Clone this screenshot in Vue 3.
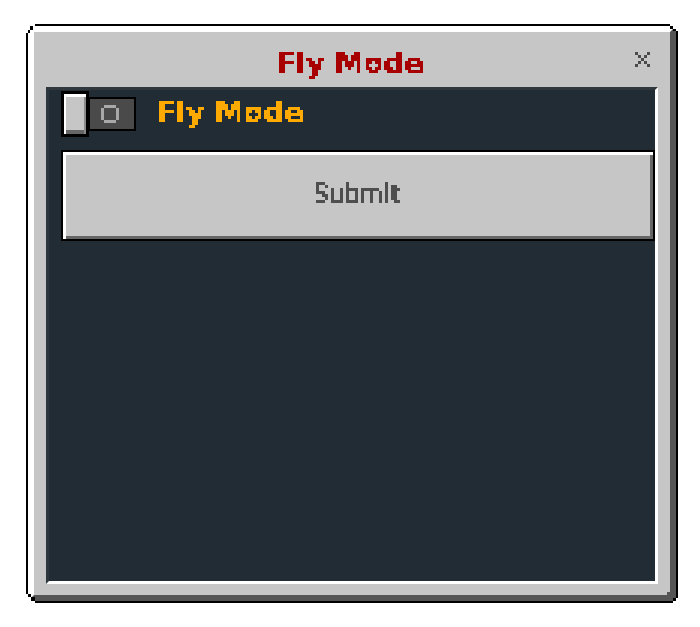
<template>
  <div class="page">
    <svg class="defs" width="0" height="0" aria-hidden="true">
      <filter id="pixel" x="0" y="0" width="100%" height="100%" primitiveUnits="userSpaceOnUse" color-interpolation-filters="sRGB">
        <feFlood x="1" y="1" width="1" height="1" />
        <feComposite width="3" height="3" />
        <feTile result="grid" />
        <feComposite in="SourceGraphic" in2="grid" operator="in" />
        <feComponentTransfer>
          <feFuncA type="discrete" tableValues="0 1 1 1" />
        </feComponentTransfer>
        <feMorphology operator="dilate" radius="1" />
        <feGaussianBlur stdDeviation="0.4" />
      </filter>
    </svg>

    <div class="window">
      <div class="bevel">
        <header class="title-bar">
          <h1 class="title">{{ title }}</h1>
          <svg class="close" viewBox="0 0 15 15" width="15" height="15">
            <path d="M0 0h3v3H0zM3 3h3v3H3zM6 6h3v3H6zM9 3h3v3H9zM12 0h3v3h-3zM3 9h3v3H3zM0 12h3v3H0zM9 9h3v3H9zM12 12h3v3h-3z" fill="#4a4a4a" />
          </svg>
        </header>

        <main class="panel">
          <div class="toggle-row">
            <div class="toggle">
              <span class="knob"></span>
              <span class="track">
                <svg class="ring" viewBox="0 0 18 18" width="18" height="18">
                  <path d="M3 0h12v3h3v12h-3v3H3v-3H0V3h3zM3 3v12h12V3z" fill="#a8a8a8" fill-rule="evenodd" />
                </svg>
              </span>
            </div>
            <span class="toggle-label">{{ title }}</span>
          </div>
          <button class="submit" type="button"><span>Submit</span></button>
        </main>
      </div>
    </div>
  </div>
</template>

<script setup>
const title = 'Fly Mode'
</script>

<style>
html, body {
  background: #fff;
}
</style>

<style scoped>
.page {
  width: 700px;
  height: 627px;
  padding: 24px 0 0 26px;
  box-sizing: border-box;
  font-family: "DejaVu Sans", sans-serif;
}

.defs {
  position: absolute;
}

.window {
  position: relative;
  width: 652px;
  height: 579px;
  box-sizing: border-box;
  padding: 2px;
  background: #000;
  clip-path: polygon(
    9px 0, 644px 0, 644px 2px, 647px 2px, 647px 5px, 650px 5px, 650px 7px, 652px 7px,
    652px 574px, 650px 574px, 650px 577px, 647px 577px, 647px 579px,
    9px 579px, 9px 577px, 5px 577px, 5px 573px, 2px 573px, 2px 570px, 0 570px,
    0 9px, 2px 9px, 2px 6px, 4px 6px, 4px 2px, 9px 2px
  );
}

/* stepped black corners over the bevel */
.window::before {
  content: "";
  position: absolute;
  inset: 0;
  z-index: 1;
  pointer-events: none;
  background:
    linear-gradient(#000, #000) 2px 6px / 2px 3px no-repeat,
    linear-gradient(#000, #000) 4px 2px / 3px 4px no-repeat,
    linear-gradient(#000, #000) 644px 2px / 3px 3px no-repeat,
    linear-gradient(#000, #000) 647px 5px / 3px 2px no-repeat,
    linear-gradient(#000, #000) 647px 574px / 3px 3px no-repeat,
    linear-gradient(#000, #000) 2px 570px / 3px 3px no-repeat,
    linear-gradient(#000, #000) 5px 573px / 4px 4px no-repeat,
    linear-gradient(#555, #555) 641px 568px / 5px 5px no-repeat;
}

.bevel {
  height: 100%;
  box-sizing: border-box;
  display: flex;
  flex-direction: column;
  padding: 0 12px 11px;
  background: #c6c6c6;
  border-style: solid;
  border-width: 6px;
  border-color: #fff #555 #555 #fff;
}

.title-bar {
  height: 55px;
  flex: none;
  box-sizing: border-box;
  padding-top: 6px;
  position: relative;
  display: flex;
  align-items: center;
  justify-content: center;
}

.title {
  margin: 0 4px 0 0;
  font-size: 29px;
  line-height: 40px;
  font-weight: 700;
  color: #a80000;
  filter: url(#pixel);
}

.close {
  position: absolute;
  right: 8px;
  top: 20px;
}

.panel {
  flex: 1;
  display: flex;
  flex-direction: column;
  gap: 13px;
  padding: 1px 0 0 12px;
  background: #222c34;
  border-style: solid;
  border-width: 3px;
  border-color: #31383d #fff #fff #2c363d;
}

.toggle-row {
  display: flex;
  align-items: center;
  gap: 20px;
}

.toggle {
  display: flex;
  align-items: center;
}

.knob {
  width: 22px;
  height: 40px;
  border: 3px solid #000;
  position: relative;
  z-index: 1;
  background: #c6c6c6;
  box-shadow: inset 0 3px 0 #fff, inset 2px 0 0 #fff, inset -2px 0 0 #8a8a8a, inset 0 -4px 0 #666;
}

.track {
  width: 44px;
  height: 30px;
  margin-left: -1px;
  border: 2px solid #000;
  display: flex;
  align-items: center;
  justify-content: center;
  background: #4a4a4a;
}

.ring {
  margin-right: 4px;
}

.toggle-label {
  margin-top: -4px;
  font-size: 29px;
  line-height: 40px;
  font-weight: 700;
  color: #ffaa00;
  filter: url(#pixel);
}

.submit {
  width: 594px;
  height: 91px;
  padding: 0 2px 4px 0;
  box-sizing: border-box;
  border: 2px solid #000;
  background: #c6c6c6;
  box-shadow: inset 3px 3px 0 #fff, inset -3px -3px 0 #666;
  font-family: "DejaVu Sans Condensed", "DejaVu Sans", sans-serif;
  font-size: 26px;
  letter-spacing: 0.7px;
  -webkit-text-stroke: 0.6px #4f4f4f;
  color: #4f4f4f;
}

.submit span {
  display: inline-block;
  filter: url(#pixel);
}
</style>
